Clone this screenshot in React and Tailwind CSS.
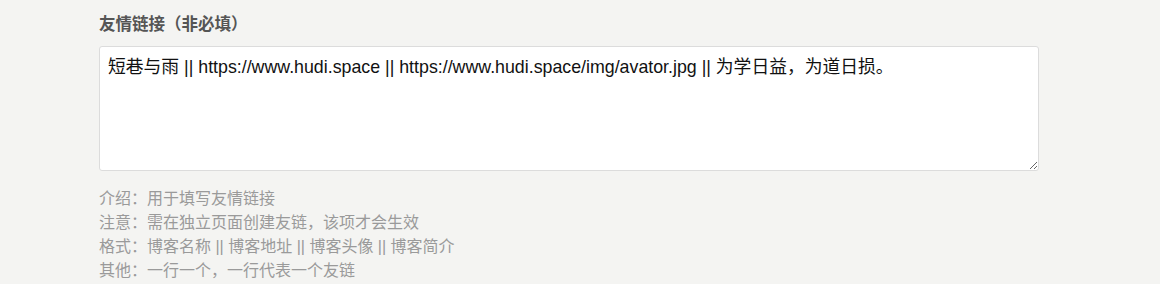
export default function App() {
  const font = { fontFamily: '"Liberation Sans", Arial, "Noto Sans CJK SC", sans-serif' };
  return (
    <div className="w-[1160px] h-[284px] bg-[#f4f4f2] overflow-hidden" style={font}>
      <div className="pl-[99px] pr-[121px] pt-[12px]">
        <div className="text-[16.5px] leading-[24px] font-bold text-[#555]">友情链接（非必填）</div>
        <textarea
          className="mt-[10px] block w-[940px] h-[125px] bg-white border border-[#dcdcdc] rounded-[3px] px-[8px] py-[8px] text-[17.8px] leading-[24px] text-[#111] outline-none resize-y"
          style={font}
          defaultValue="短巷与雨 || https://www.hudi.space || https://www.hudi.space/img/avator.jpg || 为学日益，为道日损。"
        />
        <div className="mt-[16px] text-[16px] leading-[24px] text-[#9a9a9a]">
          <div>介绍：用于填写友情链接</div>
          <div>注意：需在独立页面创建友链，该项才会生效</div>
          <div>格式：博客名称 || 博客地址 || 博客头像 || 博客简介</div>
          <div>其他：一行一个，一行代表一个友链</div>
        </div>
      </div>
    </div>
  );
}
